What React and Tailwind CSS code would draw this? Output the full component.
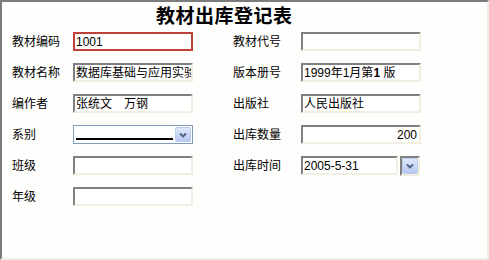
const font = { fontFamily: '"Liberation Sans", "Noto Sans CJK SC", sans-serif' };

function Field({ value = "", focused = false, right = false, width = "w-[120px]" }) {
  const border = focused
    ? "border-2 border-[#c0403a]"
    : "border-2 border-t-[#808080] border-l-[#808080] border-b-[#f1efe2] border-r-[#f1efe2]";
  return (
    <div
      className={`${width} h-[19px] ${border} bg-white flex items-center overflow-hidden whitespace-nowrap px-[1px] text-[12px] leading-none text-black ${
        right ? "justify-end pr-[2px]" : ""
      }`}
    >
      {value}
    </div>
  );
}

function ComboButton() {
  return (
    <div className="h-full w-[16px] rounded-[2px] border border-[#b9cbef] bg-gradient-to-b from-[#dfe8fb] to-[#b7c9f1] flex items-center justify-center">
      <svg width="8" height="6" viewBox="0 0 8 6">
        <path d="M1 1.5 L4 4.5 L7 1.5" fill="none" stroke="#4d6185" strokeWidth="1.8" />
      </svg>
    </div>
  );
}

function Row({ label, labelWidth = "w-[61px]", children }) {
  return (
    <div className="flex items-center h-[19px]">
      <div className={`${labelWidth} text-[12px] leading-none text-black`}>{label}</div>
      {children}
    </div>
  );
}

export default function App() {
  return (
    <div
      className="w-[489px] h-[260px] border-t-2 border-l-2 border-t-[#7c7c7c] border-l-[#7c7c7c] border-r-2 border-b-2 border-r-[#efeee6] border-b-[#efeee6] bg-[#fefefc] overflow-hidden"
      style={font}
    >
      <div className="pl-[154px] pt-[5px] h-[30px] text-[19px] leading-[20px] font-bold text-black tracking-[0.5px]">
        教材出库登记表
      </div>
      <div className="flex pl-[10px]">
        <div className="w-[221px] flex flex-col gap-[12px]">
          <Row label="教材编码">
            <Field value="1001" focused />
          </Row>
          <Row label="教材名称">
            <Field value="数据库基础与应用实验" />
          </Row>
          <Row label="编作者">
            <Field value="张统文　万钢" />
          </Row>
          <Row label="系别">
            <div className="w-[120px] h-[19px] border border-[#7f9db9] bg-white flex items-center pl-[2px] pr-[1px] py-[1px]">
              <div className="flex-1 flex items-end h-full pb-[2px]">
                <div className="w-[97px] h-[2px] bg-black" />
              </div>
              <ComboButton />
            </div>
          </Row>
          <Row label="班级">
            <Field />
          </Row>
          <Row label="年级">
            <Field />
          </Row>
        </div>
        <div className="flex flex-col gap-[12px]">
          <Row label="教材代号" labelWidth="w-[68px]">
            <Field />
          </Row>
          <Row label="版本册号" labelWidth="w-[68px]">
            <Field
              value={
                <span>
                  1999年1月第<b className="font-bold">1</b> 版
                </span>
              }
            />
          </Row>
          <Row label="出版社" labelWidth="w-[68px]">
            <Field value="人民出版社" />
          </Row>
          <Row label="出库数量" labelWidth="w-[68px]">
            <Field value="200" right />
          </Row>
          <Row label="出库时间" labelWidth="w-[68px]">
            <div className="flex items-center gap-[2px]">
              <Field value="2005-5-31" width="w-[97px]" />
              <div className="w-[20px] h-[20px] border-2 border-t-[#808080] border-l-[#808080] border-b-[#f1efe2] border-r-[#f1efe2] bg-white flex items-center justify-center">
                <ComboButton />
              </div>
            </div>
          </Row>
        </div>
      </div>
    </div>
  );
}
